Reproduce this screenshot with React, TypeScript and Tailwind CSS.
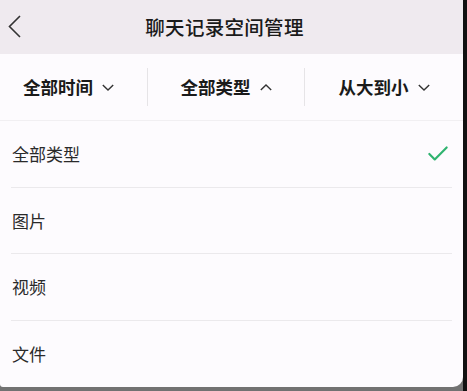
import { Check } from "lucide-react"

const filters = [
  { label: "全部时间", open: false, width: "w-[148px]", inset: "pr-[10px]" },
  { label: "全部类型", open: true, width: "w-[157px]", inset: "" },
  { label: "从大到小", open: false, width: "flex-1", inset: "" }
]

const types = ["全部类型", "图片", "视频", "文件"]

function Caret({ up }: { up: boolean }) {
  return (
    <svg width="12" height="7" viewBox="0 0 12 7" className="text-[#333]">
      <polyline
        points={up ? "0.8,6 6,1 11.2,6" : "0.8,1 6,6 11.2,1"}
        fill="none"
        stroke="currentColor"
        strokeWidth="1.4"
      />
    </svg>
  )
}

function FilterTab({
  label,
  open,
  width,
  inset,
  divider
}: {
  label: string
  open: boolean
  width: string
  inset: string
  divider: boolean
}) {
  return (
    <div className={`flex h-full items-center ${width}`}>
      <div className={`flex flex-1 items-center justify-center gap-[9px] ${inset}`}>
        <span className="text-[17.5px] font-semibold text-[#1a1a1a]">{label}</span>
        <Caret up={open} />
      </div>
      {divider ? <div className="h-[38px] w-px bg-[#e6e4e7]" /> : null}
    </div>
  )
}

export default function App() {
  return (
    <div
      className="flex h-[391px] w-[467px] bg-[#727272]"
      style={{ fontFamily: '"Noto Sans CJK SC", "Noto Sans", sans-serif' }}
    >
      <div className="flex h-[387px] w-[463px] flex-col overflow-hidden rounded-br-[10px] rounded-bl-[3px] bg-[#fdfbfe]">
        {/* header */}
        <div className="relative flex h-[54px] items-center justify-center bg-[#efeaef] pr-[14px]">
          <svg
            width="14"
            height="24"
            viewBox="0 0 14 24"
            className="absolute left-[8px] top-[15px] text-[#333]"
          >
            <polyline
              points="12,1 1.5,11.5 12,22"
              fill="none"
              stroke="currentColor"
              strokeWidth="1.6"
            />
          </svg>
          <span className="text-[19.5px] font-medium tracking-[0.3px] text-[#1a1a1a]">
            聊天记录空间管理
          </span>
        </div>

        {/* filter bar */}
        <div className="flex h-[67px] items-center border-b border-[#f1eff2]">
          {filters.map((f, i) => (
            <FilterTab
              key={f.label}
              label={f.label}
              open={f.open}
              width={f.width}
              inset={f.inset}
              divider={i < filters.length - 1}
            />
          ))}
        </div>

        {/* type options */}
        <div className="flex flex-col px-[11px]">
          {types.map((t, i) => (
            <div
              key={t}
              className={`flex h-[66.5px] items-center justify-between pl-px ${
                i < types.length - 1 ? "border-b border-[#ebe9ec]" : ""
              }`}
            >
              <span className="text-[17px] text-[#2a2a2a]">{t}</span>
              {i === 0 ? (
                <Check className="mr-[1px] size-[26px] text-[#2fb36f]" strokeWidth={2} />
              ) : null}
            </div>
          ))}
        </div>
      </div>
      <div className="h-full w-[4px] bg-[#111]" />
    </div>
  )
}
